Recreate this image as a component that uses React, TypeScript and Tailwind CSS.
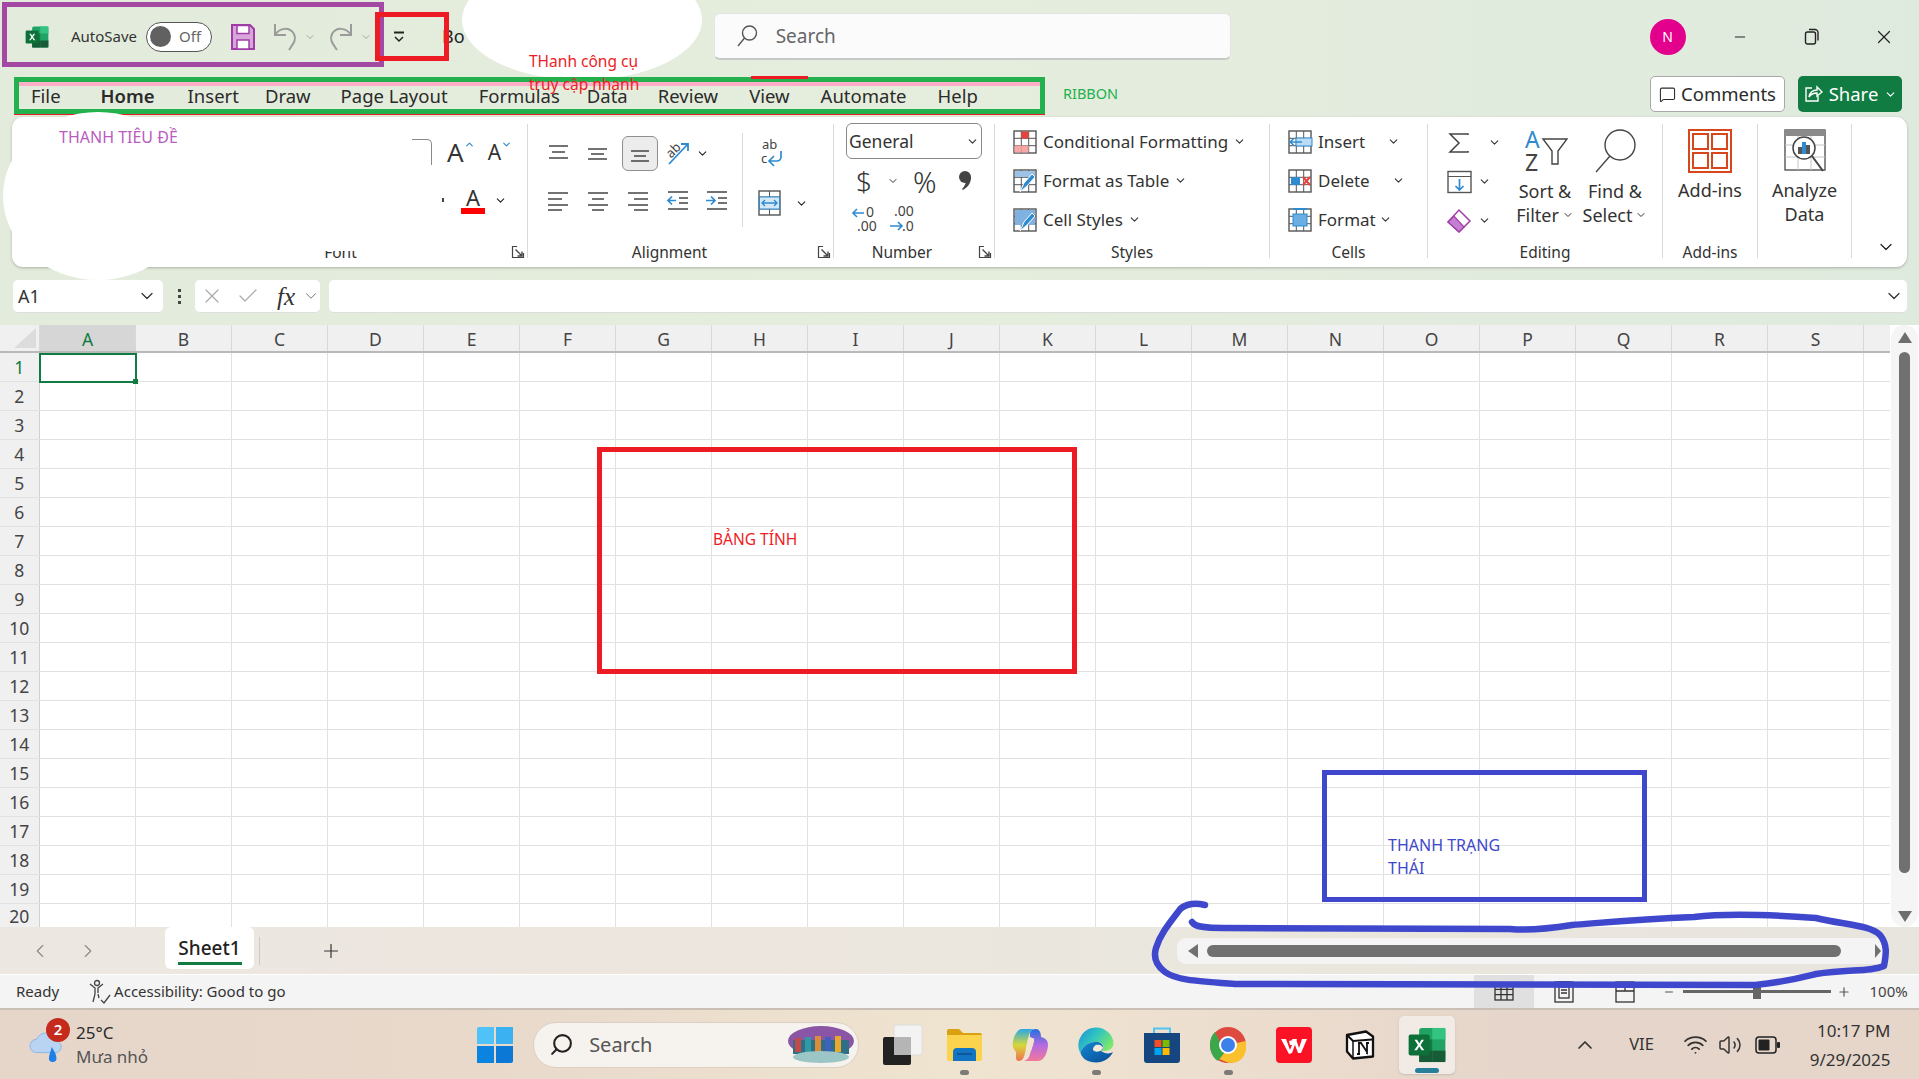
import React from "react";
import { ChevronDown, ChevronLeft, ChevronRight, ChevronUp, Plus, Minus, X, Check, MessageSquare, Search, Wifi, Volume2 } from "lucide-react";

const cols = "ABCDEFGHIJKLMNOPQRS".split("");
const rows = Array.from({ length: 20 }, (_, i) => i + 1);

function Chev({ s = 12, c = "" }: { s?: number; c?: string }) {
  return <ChevronDown size={s} strokeWidth={2} className={c} />;
}

function ExcelLogo({ s = 28 }: { s?: number }) {
  return (
    <svg width={s} height={s} viewBox="0 0 32 32">
      <rect x="10" y="3" width="20" height="26" rx="2" fill="#21a366" />
      <rect x="20" y="3" width="10" height="8.7" fill="#33c481" />
      <rect x="10" y="11.7" width="10" height="8.7" fill="#107c41" />
      <rect x="20" y="20.3" width="10" height="8.7" fill="#185c37" />
      <rect x="10" y="20.3" width="10" height="8.7" fill="#185c37" />
      <rect x="2" y="8" width="16" height="16" rx="1.5" fill="#0e7039" />
      <path d="M6.5 12l2.6 4-2.8 4h2l1.8-2.8 1.8 2.8h2l-2.8-4 2.6-4h-1.9l-1.7 2.6L8.400 12z" fill="#fff" />
    </svg>
  );
}

function Lines({ w = 24, ys, xs }: { w?: number; ys: number[]; xs?: [number, number][] }) {
  return (
    <svg width={w} height="24" viewBox="0 0 24 24" fill="none" stroke="#444" strokeWidth="1.5">
      {ys.map((y, i) => (
        <path key={i} d={`M${xs ? xs[i][0] : 2} ${y}H${xs ? xs[i][1] : 22}`} />
      ))}
    </svg>
  );
}

function GridIcon({ fill, accent }: { fill?: string; accent?: React.ReactNode }) {
  return (
    <svg width="26" height="26" viewBox="0 0 26 26" fill="none">
      <rect x="2" y="2" width="22" height="22" fill="#fff" stroke="#555" strokeWidth="1.4" />
      {fill && <rect x="3" y="3" width="20" height="20" fill={fill} />}
      <path d="M9.300 2v22M16.700 2v22M2 9.300h22M2 16.700h22" stroke="#555" strokeWidth="1" />
      {accent}
    </svg>
  );
}

function Group({ w, label, children, launcher, lc = "" }: { w: string; label?: string; children: React.ReactNode; launcher?: boolean; lc?: string }) {
  return (
    <div className={`${w} h-[134px] shrink-0 border-r border-[#d9d9d9] flex flex-col relative`}>
      <div className="h-[122px] shrink-0 relative">{children}</div>
      <div className={`h-[14px] flex items-center justify-center text-[15.500px] text-[#333] ${lc}`}>{label}</div>
      {launcher && (
        <svg width="14" height="14" viewBox="0 0 14 14" fill="none" stroke="#444" strokeWidth="1.200" className="absolute right-[2px] -bottom-[1px]">
          <path d="M6 1.500H1.500V12.500H12.500V8" />
          <path d="M4.500 4.500L11 11M11 6.500V11H6.500" strokeWidth="1.400" />
        </svg>
      )}
    </div>
  );
}

function StyleRow({ icon, label }: { icon: React.ReactNode; label: string }) {
  return (
    <div className="h-[39px] flex items-center text-[17px] text-[#333] gap-[5px]">
      <span className="w-[26px] flex justify-center">{icon}</span>
      <span>{label}</span>
      <Chev s={13} />
    </div>
  );
}

function TaskIcon({ w = "w-[66px]", dot, children, active }: { w?: string; dot?: boolean; children: React.ReactNode; active?: boolean }) {
  return (
    <div className={`${w} h-[58px] flex items-center justify-center relative shrink-0 rounded-[5px] ${active ? "bg-[#f2ebe5] shadow-sm" : ""}`}>
      {children}
      {dot && <span className="absolute -bottom-[1px] w-[9px] h-[5px] rounded-full bg-[#7d7a77]" />}
      {active && <span className="absolute bottom-[1px] w-[24px] h-[5px] rounded-full bg-[#26809a]" />}
    </div>
  );
}

export default function App() {
  return (
    <div
      className="relative w-[1919px] h-[1079px] overflow-hidden flex flex-col bg-[linear-gradient(90deg,#e3ecdc_0%,#e5eddd_50%,#dfeade_100%)] text-[#242424]"
      style={{ fontFamily: '"Noto Sans","Open Sans",sans-serif' }}
    >
      {/* Title bar */}
      <div className="h-[76px] shrink-0 flex items-center pb-[3px] relative">
        <div className="w-[24px]" />
        <ExcelLogo s={26} />
        <span className="ml-[21px] text-[15px] text-[#333]">AutoSave</span>
        <div className="ml-[9px] w-[66px] h-[30px] rounded-full border border-[#555] bg-white flex items-center pl-[3px]">
          <span className="w-[21px] h-[21px] rounded-full bg-[#616161]" />
          <span className="ml-[8px] text-[15px] text-[#666]">Off</span>
        </div>
        <svg width="26" height="28" viewBox="0 0 26 28" className="ml-[18px]">
          <path d="M2 2h18l4 4v20H2z" fill="#d9a6dc" stroke="#a03ca8" strokeWidth="2" />
          <rect x="7" y="2.500" width="12" height="8" fill="#fff" stroke="#a03ca8" strokeWidth="1.500" />
          <rect x="7" y="17" width="12" height="9" fill="#fff" stroke="#a03ca8" strokeWidth="1.500" />
        </svg>
        <svg width="26" height="32" viewBox="0 0 26 32" fill="none" stroke="#9b9b9b" strokeWidth="2" className="ml-[16px]">
          <path d="M3 3v11h11" />
          <path d="M3 14C8 6 18 6 22 13c3 6-1 10-5 16" />
        </svg>
        <Chev s={12} c="ml-[6px] text-[#a5a5a5]" />
        <svg width="26" height="32" viewBox="0 0 26 32" fill="none" stroke="#9b9b9b" strokeWidth="2" className="ml-[12px]">
          <path d="M23 3v11H12" />
          <path d="M23 14C18 6 8 6 4 13c-3 6 1 10 5 16" />
        </svg>
        <Chev s={12} c="ml-[6px] text-[#a5a5a5]" />
        <svg width="14" height="14" viewBox="0 0 14 14" fill="none" stroke="#222" strokeWidth="1.500" className="ml-[20px]">
          <path d="M2 2.500h10" strokeWidth="2" />
          <path d="M3 7l4 4 4-4" />
        </svg>
        <span className="ml-[36px] text-[18px]">Bo</span>
        <div className="ml-[249px] w-[517px] h-[47px] shrink-0 rounded-[6px] bg-[#fbfbfb] border border-[#e4e4e4] border-b-2 border-b-[#c8c8c8] flex items-center pl-[20px] text-[#666]">
          <svg width="24" height="24" viewBox="0 0 24 24" fill="none" stroke="#555" strokeWidth="1.400">
            <circle cx="14.500" cy="9" r="7" />
            <path d="M9.500 14L3 22" />
          </svg>
          <span className="ml-[17px] text-[19px]">Search</span>
        </div>
        <div className="ml-[419px] w-[36px] h-[36px] rounded-full bg-[#e3008c] text-white text-[14px] flex items-center justify-center">N</div>
        <Minus size={16} strokeWidth={1.500} className="ml-[46px]" />
        <svg width="16" height="18" viewBox="0 0 16 18" fill="none" stroke="#222" strokeWidth="1.400" className="ml-[56px]">
          <rect x="1.500" y="4" width="10" height="12" rx="2" />
          <path d="M5 1.500h6a3 3 0 0 1 3 3v8" />
        </svg>
        <X size={22} strokeWidth={1.300} className="ml-[53px]" />
      </div>

      {/* Tabs */}
      <div className="h-[41px] shrink-0 flex items-center text-[18.500px] text-[#2b2b2b] relative">
        <div className="flex items-center ml-[31px] -mt-[1px]">
          <span>File</span>
          <span className="font-semibold ml-[40px]">Home</span>
          <span className="ml-[33px]">Insert</span>
          <span className="ml-[26px]">Draw</span>
          <span className="ml-[30px]">Page Layout</span>
          <span className="ml-[31px]">Formulas</span>
          <span className="ml-[27px]">Data</span>
          <span className="ml-[30px]">Review</span>
          <span className="ml-[31px]">View</span>
          <span className="ml-[31px]">Automate</span>
          <span className="ml-[31px]">Help</span>
        </div>
        <div className="absolute left-[1650px] top-[0px] w-[135px] h-[36px] rounded-[5px] bg-white border border-[#a8a8a8] flex items-center justify-center gap-[5px]">
          <MessageSquare size={17} strokeWidth={1.500} />
          <span>Comments</span>
        </div>
        <div className="absolute left-[1798px] top-[0px] w-[104px] h-[36px] rounded-[5px] bg-[#107c41] text-white flex items-center justify-center gap-[6px]">
          <svg width="20" height="20" viewBox="0 0 20 20" fill="none" stroke="#fff" strokeWidth="1.400">
            <path d="M9 4H3v13h12v-5" />
            <path d="M6 13c1-5 4-7 8-7V3l5 5-5 4V9c-3 0-6 1-8 4z" />
          </svg>
          <span>Share</span>
          <Chev s={13} />
        </div>
      </div>

      {/* Ribbon */}
      <div className="ml-[12px] w-[1895px] h-[150px] shrink-0 bg-white rounded-[11px] shadow-[0_1px_3px_rgba(0,0,0,0.25)] flex py-[7px]">
        <Group w="w-[516px]" label="Font" launcher lc="pl-[142px]">
          <div className="flex justify-end items-start pt-[7px] h-full">
            <div className="flex flex-col w-[110px] mr-[5px]">
              <div className="flex items-center h-[42px] text-[#333]">
                <div className="w-[20px] h-[26px] border-t border-r border-[#8a8a8a] rounded-tr-[5px]" />
                <span className="ml-[15px] text-[26px] leading-none">A</span>
                <ChevronUp size={11} strokeWidth={2.500} className="text-[#2e8bd0] -mt-[16px]" />
                <span className="ml-[13px] text-[21px] leading-none">A</span>
                <ChevronDown size={11} strokeWidth={2.500} className="text-[#2e8bd0] -mt-[16px]" />
              </div>
              <div className="flex items-center mt-[6px] h-[42px]">
                <span className="ml-[30px] w-[2px] h-[4px] bg-[#444] mr-[17px]" />
                <div className="flex flex-col items-center w-[24px]">
                  <span className="text-[22px] leading-[22px] text-[#333]">A</span>
                  <span className="w-[24px] h-[6px] bg-[#ff0000]" />
                </div>
                <Chev s={13} c="ml-[9px]" />
              </div>
            </div>
          </div>
        </Group>

        <Group w="w-[306px]" label="Alignment" launcher lc="pr-[22px]">
          <div className="flex h-[111px]">
            <div className="w-[214px] pl-[18px] pt-[11px] flex flex-col">
              <div className="flex items-center h-[36px]">
                <span className="w-[39px]"><Lines ys={[5, 11, 17]} xs={[[3, 22], [6, 19], [3, 22]]} /></span>
                <span className="w-[37px]"><Lines ys={[8, 13, 18]} xs={[[3, 22], [6, 19], [3, 22]]} /></span>
                <span className="w-[36px] h-[35px] bg-[#ececec] border border-[#8f8f8f] rounded-[6px] flex items-center justify-center"><Lines ys={[10, 15, 20]} xs={[[3, 21], [6, 18], [3, 21]]} /></span>
                <svg width="28" height="28" viewBox="0 0 28 28" fill="none" className="ml-[6px]">
                  <text x="2" y="16" fontSize="13" fill="#444" transform="rotate(-45 9 12)" style={{ fontFamily: "Noto Sans" }}>ab</text>
                  <path d="M5 25L23 6M17 5h7v7" stroke="#2e8bd0" strokeWidth="1.800" />
                </svg>
                <Chev s={13} c="ml-[4px]" />
              </div>
              <div className="flex items-center h-[36px] mt-[11px]">
                <span className="w-[40px]"><Lines ys={[5, 11, 17, 22]} xs={[[2, 22], [2, 16], [2, 22], [2, 16]]} /></span>
                <span className="w-[40px]"><Lines ys={[5, 11, 17, 22]} xs={[[2, 22], [6, 18], [2, 22], [6, 18]]} /></span>
                <span className="w-[40px]"><Lines ys={[5, 11, 17, 22]} xs={[[2, 22], [8, 22], [2, 22], [8, 22]]} /></span>
                <svg width="24" height="24" viewBox="0 0 24 24" fill="none" className="mr-[15px]">
                  <path d="M2 4h20M13 10h9M13 15h9M2 21h20" stroke="#444" strokeWidth="1.500" />
                  <path d="M10 12.500H2M6 8.500l-4 4 4 4" stroke="#2e8bd0" strokeWidth="1.700" />
                </svg>
                <svg width="24" height="24" viewBox="0 0 24 24" fill="none">
                  <path d="M2 4h20M13 10h9M13 15h9M2 21h20" stroke="#444" strokeWidth="1.500" />
                  <path d="M1 12.500h9M6 8.500l4 4-4 4" stroke="#2e8bd0" strokeWidth="1.700" />
                </svg>
              </div>
            </div>
            <div className="h-[94px] mt-[9px] border-l border-[#d9d9d9] flex flex-col pl-[14px]">
              <div className="h-[39px] flex items-center">
                <svg width="28" height="34" viewBox="0 0 28 34" fill="none">
                  <text x="5" y="13" fontSize="13" fill="#444" style={{ fontFamily: "Noto Sans" }}>ab</text>
                  <text x="4" y="27" fontSize="13" fill="#444" style={{ fontFamily: "Noto Sans" }}>c</text>
                  <path d="M24 15v6a4 4 0 0 1-4 4h-7M17 20l-5 5 5 5" stroke="#2e8bd0" strokeWidth="1.700" />
                </svg>
              </div>
              <div className="flex items-center h-[36px] mt-[13px] -ml-[1px]">
                <svg width="26" height="30" viewBox="0 0 26 30" fill="none">
                  <rect x="3" y="3" width="21" height="24" stroke="#555" strokeWidth="1.400" fill="#fff" />
                  <path d="M3 9h21M3 21h21M13.500 3v6M13.500 21v6" stroke="#555" />
                  <rect x="3.500" y="9" width="20" height="12" fill="#d4e8f7" stroke="#2e8bd0" />
                  <path d="M6 15h15M9 12l-3 3 3 3M18 12l3 3-3 3" stroke="#2e8bd0" strokeWidth="1.400" />
                </svg>
                <Chev s={13} c="ml-[13px]" />
              </div>
            </div>
          </div>
        </Group>

        <Group w="w-[161px]" label="Number" launcher lc="pr-[24px]">
          <div className="flex flex-col pl-[12px]">
            <div className="w-[136px] h-[36px] mt-[-1px] rounded-[6px] border border-[#8a8a8a] flex items-center justify-between px-[2px] text-[17.500px] text-[#333]">
              <span>General</span><Chev s={13} />
            </div>
            <div className="flex items-center h-[44px] text-[#333]">
              <span className="ml-[10px] text-[28px] font-light leading-none w-[24px]">$</span>
              <Chev s={12} c="ml-[7px]" />
              <span className="ml-[14px] text-[29px] font-light leading-none">%</span>
              <svg width="14" height="22" viewBox="0 0 14 22" className="ml-[21px]">
                <circle cx="7" cy="7" r="6" fill="#444" />
                <path d="M13 7c0 6-3 10-8 13l-1-1c3-3 4-6 4-9z" fill="#444" />
              </svg>
            </div>
            <div className="flex items-center h-[30px] mt-[1px] gap-[10px] pl-[5px] text-[#444]">
              <svg width="28" height="30" viewBox="0 0 28 30" fill="none">
                <path d="M13 9H2M6 5L2 9l4 4" stroke="#2e8bd0" strokeWidth="1.600" />
                <text x="15" y="13" fontSize="14" fill="#444" style={{ fontFamily: "Noto Sans" }}>0</text>
                <text x="6" y="27" fontSize="14" fill="#444" style={{ fontFamily: "Noto Sans" }}>.00</text>
              </svg>
              <svg width="28" height="30" viewBox="0 0 28 30" fill="none">
                <text x="5" y="12" fontSize="14" fill="#444" style={{ fontFamily: "Noto Sans" }}>.00</text>
                <path d="M1 22h12M9 18l4 4-4 4" stroke="#2e8bd0" strokeWidth="1.600" />
                <text x="13" y="27" fontSize="14" fill="#444" style={{ fontFamily: "Noto Sans" }}>.0</text>
              </svg>
            </div>
          </div>
        </Group>

        <Group w="w-[275px]" label="Styles">
          <div className="flex flex-col pl-[17px] -mt-[2px]">
            <StyleRow label="Conditional Formatting" icon={<GridIcon accent={<><rect x="9.500" y="2.500" width="7" height="7" fill="#e8413f" /><rect x="9.500" y="16.500" width="7" height="7" fill="#f8a6a6" /><rect x="2.500" y="16.500" width="7" height="7" fill="#f8a6a6" /></>} />} />
            <StyleRow label="Format as Table" icon={<GridIcon accent={<><rect x="3" y="3" width="20" height="6" fill="#9cc3e6" /><path d="M8 24l4-9 8-9 3 3-8 9z" fill="#2e8bd0" stroke="#fff" /></>} />} />
            <StyleRow label="Cell Styles" icon={<GridIcon accent={<><rect x="3" y="3" width="20" height="15" fill="#7fb2e0" /><path d="M8 24l4-9 8-9 3 3-8 9z" fill="#2e8bd0" stroke="#fff" /></>} />} />
          </div>
        </Group>

        <Group w="w-[158px]" label="Cells">
          <div className="flex flex-col pl-[17px] -mt-[2px] text-[17px] text-[#333]">
            <div className="h-[39px] flex items-center gap-[5px]">
              <GridIcon accent={<><rect x="9" y="9" width="16" height="8" fill="#bcdcf4" stroke="#2e8bd0" /><path d="M15 13H3M7 9.500L3 13l4 3.500" stroke="#2e8bd0" strokeWidth="1.500" fill="none" /></>} />
              <span>Insert</span>
              <Chev s={13} c="ml-[17px]" />
            </div>
            <div className="h-[39px] flex items-center gap-[5px]">
              <GridIcon accent={<><rect x="4" y="9" width="9" height="8" fill="#2e8bd0" /><path d="M16 9l7 8M23 9l-7 8" stroke="#e8413f" strokeWidth="2" /></>} />
              <span>Delete</span>
              <Chev s={13} c="ml-[17px]" />
            </div>
            <div className="h-[39px] flex items-center gap-[5px]">
              <GridIcon accent={<><rect x="6" y="7" width="14" height="12" fill="#6aaee4" stroke="#2e8bd0" /><path d="M6 2h14" stroke="#2e8bd0" strokeWidth="2" /></>} />
              <span>Format</span>
              <Chev s={13} c="-ml-[2px]" />
            </div>
          </div>
        </Group>

        <Group w="w-[235px]" label="Editing">
          <div className="flex text-[18px] text-[#333] leading-[24px]">
            <div className="w-[90px] flex flex-col pl-[18px] -mt-[1px]">
              <div className="h-[39px] flex items-center">
                <svg width="26" height="26" viewBox="0 0 26 26" fill="none" stroke="#444" strokeWidth="1.500"><path d="M22 5V4H4l9 9-9 9h18v-1" /></svg>
                <Chev s={13} c="ml-[16px]" />
              </div>
              <div className="h-[39px] flex items-center">
                <svg width="26" height="26" viewBox="0 0 26 26" fill="none"><rect x="2" y="2.500" width="23" height="21" stroke="#555" strokeWidth="1.400" /><path d="M2 7.500h23" stroke="#555" /><path d="M13.500 10v11M9.500 17l4 4 4-4" stroke="#2e8bd0" strokeWidth="1.700" /></svg>
                <Chev s={13} c="ml-[6px]" />
              </div>
              <div className="h-[39px] flex items-center">
                <svg width="26" height="26" viewBox="0 0 26 26" fill="none"><path d="M2 14L13 2l11 11-11 11z" fill="#fff" stroke="#a03ca8" strokeWidth="1.500" /><path d="M2 14l6-6 10 11-5 5z" fill="#c47fd0" stroke="#a03ca8" strokeWidth="1.200" /></svg>
                <Chev s={13} c="ml-[6px]" />
              </div>
            </div>
            <div className="w-[70px] flex flex-col items-center -ml-[8px]">
              <svg width="46" height="46" viewBox="0 0 46 46" fill="none" className="mt-[4px]">
                <text x="3" y="20" fontSize="23" fill="#2e8bd0" style={{ fontFamily: "Noto Sans" }}>A</text>
                <text x="3" y="43" fontSize="23" fill="#444" style={{ fontFamily: "Noto Sans" }}>Z</text>
                <path d="M21 11h24l-9 12v13h-6V23z" stroke="#444" strokeWidth="1.400" />
              </svg>
              <span className="mt-[5px]">Sort &amp;</span>
              <span className="flex items-center gap-[3px]">Filter<Chev s={12} /></span>
            </div>
            <div className="w-[70px] flex flex-col items-center">
              <svg width="46" height="46" viewBox="0 0 46 46" fill="none" stroke="#444" strokeWidth="1.400" className="mt-[4px]">
                <circle cx="28" cy="17" r="15" />
                <path d="M18 28L4 44" />
              </svg>
              <span className="mt-[5px]">Find &amp;</span>
              <span className="flex items-center gap-[3px]">Select<Chev s={12} /></span>
            </div>
          </div>
        </Group>

        <Group w="w-[95px]" label="Add-ins">
          <div className="flex flex-col items-center text-[18px] text-[#333]">
            <svg width="44" height="44" viewBox="0 0 44 44" fill="none" stroke="#d8461c" strokeWidth="2" className="mt-[5px]">
              <rect x="1" y="1" width="42" height="42" />
              <rect x="5" y="5" width="15" height="15" />
              <rect x="24" y="5" width="15" height="15" />
              <rect x="5" y="24" width="15" height="15" />
              <rect x="24" y="24" width="15" height="15" />
            </svg>
            <span className="mt-[5px] leading-[24px]">Add-ins</span>
          </div>
        </Group>

        <Group w="w-[94px]">
          <div className="flex flex-col items-center text-[18px] text-[#333] leading-[24px]">
            <svg width="44" height="44" viewBox="0 0 44 44" fill="none" className="mt-[5px]">
              <rect x="2" y="1" width="40" height="40" fill="#fff" stroke="#555" strokeWidth="1.400" />
              <rect x="2" y="1" width="40" height="6" fill="#8a8a8a" />
              <path d="M2 16h40M2 28h40M15 7v34M28 7v34" stroke="#c4c4c4" />
              <circle cx="21" cy="19" r="11" fill="#fff" stroke="#444" strokeWidth="1.500" />
              <rect x="15" y="18" width="4" height="7" fill="#555" />
              <rect x="19" y="13" width="4" height="12" fill="#2e8bd0" />
              <rect x="23" y="16" width="4" height="9" fill="#555" />
              <path d="M29 27l11 15" stroke="#444" strokeWidth="2" />
            </svg>
            <span className="mt-[5px]">Analyze</span>
            <span>Data</span>
          </div>
        </Group>

        <div className="flex-1 flex items-end justify-center pb-[3px] pl-[12px]">
          <ChevronDown size={20} strokeWidth={1.500} />
        </div>
      </div>

      {/* Formula bar */}
      <div className="h-[33px] mt-[13px] shrink-0 flex items-stretch ml-[13px] text-[#333]">
        <div className="w-[150px] bg-white rounded-[5px] border-b border-[#ddd] flex items-center justify-between pl-[5px] pr-[6px] text-[18px]">
          <span className="mt-[1px]">A1</span><ChevronDown size={20} strokeWidth={1.500} />
        </div>
        <div className="w-[32px] flex flex-col items-center justify-center gap-[3px]">
          <span className="w-[3px] h-[3px] bg-[#444]" /><span className="w-[3px] h-[3px] bg-[#444]" /><span className="w-[3px] h-[3px] bg-[#444]" />
        </div>
        <div className="w-[125px] bg-white rounded-[5px] border-b border-[#ddd] flex items-center pl-[5px]">
          <X size={24} strokeWidth={1.200} className="text-[#a9a9a9]" />
          <Check size={24} strokeWidth={1.200} className="ml-[12px] text-[#a9a9a9]" />
          <span className="ml-[17px] text-[25px] italic text-[#333] leading-none" style={{ fontFamily: '"Liberation Serif",serif' }}>fx</span>
          <ChevronDown size={18} strokeWidth={1.200} className="text-[#666] ml-[7px]" />
        </div>
        <div className="ml-[9px] w-[1578px] bg-white rounded-[5px] border-b border-[#ddd] flex items-center justify-end pr-[3px]">
          <ChevronDown size={20} strokeWidth={1.500} />
        </div>
      </div>

      {/* Sheet grid */}
      <div className="mt-[12px] h-[602px] shrink-0 flex bg-white relative">
        <div className="w-[1890px] overflow-hidden">
          <div className="h-[28px] flex bg-[#f0f0f0] border-b-2 border-[#b9b9b9] relative">
            <div className="w-[39.500px] shrink-0 border-r border-[#d8d8d8] flex items-end justify-end pr-[3px] pb-[3px]">
              <span className="border-b-[20px] border-b-[#dcdcdc] border-l-[22px] border-l-transparent" />
            </div>
            {cols.map((c, i) => (
              <div key={c} className={`w-[96px] shrink-0 border-r border-[#d8d8d8] flex items-center justify-center pl-[1px] pt-[2px] text-[17.500px] ${i === 0 ? "bg-[#d6d6d6] text-[#107c41]" : "text-[#444]"}`}>{c}</div>
            ))}
          </div>
          {rows.map((r) => (
            <div key={r} className={`flex border-b border-[#e1e1e1] ${r === 20 ? "h-[24px] border-b-0" : "h-[29px]"}`}>
              <div className={`w-[39.500px] shrink-0 bg-[#f0f0f0] border-r border-[#d0d0d0] flex items-center justify-center pt-[1px] text-[17.500px] ${r === 1 ? "text-[#107c41]" : "text-[#444]"}`}>{r}</div>
              {cols.map((c) => (
                <div key={c} className="w-[96px] shrink-0 border-r border-[#e1e1e1]" />
              ))}
            </div>
          ))}
        </div>
        {/* Vertical scrollbar */}
        <div className="w-[27px] ml-[1px] bg-[#f5f5f5] rounded-full flex flex-col items-center pt-[7px]">
          <span className="border-l-[7px] border-r-[7px] border-b-[11px] border-l-transparent border-r-transparent border-b-[#6e6e6e]" />
          <span className="mt-[9px] w-[11px] h-[521px] rounded-full bg-[#707070]" />
          <span className="mt-[38px] border-l-[7px] border-r-[7px] border-t-[11px] border-l-transparent border-r-transparent border-t-[#6e6e6e]" />
        </div>
        <div className="absolute left-[39px] top-[28px] w-[98px] h-[30px] border-2 border-[#107c41]">
          <span className="absolute -right-[3px] -bottom-[3px] w-[5px] h-[5px] bg-[#107c41]" />
        </div>
      </div>

      {/* Sheet tabs */}
      <div className="h-[48px] shrink-0 flex items-center bg-[linear-gradient(90deg,#ece7e0_0%,#ece6df_40%,#eae7de_60%,#e8e4de_100%)] border-b border-white">
        <ChevronLeft size={22} strokeWidth={1.200} className="ml-[29px] text-[#888]" />
        <ChevronRight size={22} strokeWidth={1.200} className="ml-[26px] text-[#888]" />
        <div className="ml-[66px] w-[89px] h-[42px] -mt-[6px] bg-white rounded-[6px] flex flex-col items-center pt-[7px] text-[19px] font-medium relative">
          <span className="leading-[28px] text-[#222]">Sheet1</span>
          <span className="w-[64px] h-[3px] bg-[#107c41]" />
        </div>
        <span className="ml-[5px] w-[1px] h-[28px] bg-[#cfcaca]" />
        <Plus size={22} strokeWidth={1.300} className="ml-[60px] text-[#333]" />
        <div className="ml-[835px] w-[710px] h-[26px] rounded-[9px] bg-[#f4f4f4] flex items-center pl-[11px]">
          <span className="border-r-[10px] border-t-[7px] border-b-[7px] border-r-[#707070] border-t-transparent border-b-transparent" />
          <span className="ml-[9px] w-[634px] h-[12px] rounded-full bg-[#707070]" />
          <span className="ml-[34px] border-l-[6px] border-t-[7px] border-b-[7px] border-l-[#707070] border-t-transparent border-b-transparent" />
        </div>
      </div>

      {/* Status bar */}
      <div className="h-[35px] shrink-0 flex items-center bg-[#f4f4f4] border-b-[2px] border-[#c9bfb5] text-[15px] text-[#333]">
        <span className="ml-[16px]">Ready</span>
        <svg width="24" height="26" viewBox="0 0 24 26" fill="none" stroke="#444" strokeWidth="1.300" className="ml-[29px]">
          <circle cx="9" cy="4" r="2.500" />
          <path d="M2 5l5 4v6l-2 8M15 5l-5 4v5M10 15l1 4" />
          <path d="M13 21l3 3 6-8" />
        </svg>
        <span className="ml-[2px]">Accessibility: Good to go</span>
        <div className="ml-[1188px] w-[60px] h-[33px] bg-[#e0e0e0] flex items-center justify-center">
          <svg width="20" height="20" viewBox="0 0 20 20" fill="none" stroke="#333" strokeWidth="1.300"><rect x="1" y="2" width="18" height="16" /><path d="M7 2v16M13 2v16M1 7.300h18M1 12.600h18" /></svg>
        </div>
        <svg width="22" height="22" viewBox="0 0 22 22" fill="none" stroke="#333" strokeWidth="1.300" className="ml-[19px]"><rect x="2" y="1" width="18" height="20" /><rect x="6" y="1" width="10" height="16" /><path d="M8 6h6M8 9h6M8 12h6" /></svg>
        <svg width="22" height="22" viewBox="0 0 22 22" fill="none" stroke="#333" strokeWidth="1.300" className="ml-[39px]"><rect x="2" y="1" width="18" height="20" /><path d="M2 10h18M11 1v9" /></svg>
        <Minus size={12} className="ml-[27px] text-[#555]" />
        <div className="ml-[8px] w-[148px] h-[3px] bg-[#666] relative flex items-center justify-center">
          <span className="absolute w-[8px] h-[14px] bg-[#666]" />
        </div>
        <Plus size={14} className="ml-[6px] text-[#555]" />
        <span className="ml-[19px] text-[15px] text-[#444]">100%</span>
      </div>

      {/* Taskbar */}
      <div className="flex-1 flex items-center bg-[linear-gradient(90deg,#e6d6ca_0%,#e8d9cb_25%,#efe4d0_50%,#eee0d0_60%,#e5d5ca_80%,#e6d6ca_100%)] text-[#333]">
        <div className="relative ml-[29px] w-[36px] h-[48px] flex items-center">
          <svg width="38" height="44" viewBox="0 0 38 44" fill="none">
            <path d="M8 30a7 7 0 0 1 0-14 11 11 0 0 1 21 2 6 6 0 0 1-2 12z" fill="#b9d4f2" stroke="#8ab6e8" />
            <path d="M24 24c3 5 5 8 5 12a4 4 0 0 1-8 0c0-4 2-7 3-12z" fill="#1e7fe6" />
          </svg>
          <span className="absolute left-[17px] -top-[3px] w-[24px] h-[24px] rounded-full bg-[#c42b1c] text-white text-[15px] font-semibold flex items-center justify-center">2</span>
        </div>
        <div className="ml-[11px] flex flex-col text-[17px] leading-[24px]">
          <span className="text-[#2b2b2b]">25°C</span>
          <span className="text-[#555]">Mưa nhỏ</span>
        </div>
        <div className="ml-[329px] grid grid-cols-2 gap-[2px] w-[36px]">
          <span className="h-[17px] bg-[#4fc3f7] rounded-tl-[2px]" />
          <span className="h-[17px] bg-[#3bb1f2]" />
          <span className="h-[17px] bg-[#0a84df]" />
          <span className="h-[17px] bg-[#0a78d4] rounded-br-[2px]" />
        </div>
        <div className="ml-[20px] w-[326px] h-[46px] rounded-full bg-[#f6f2ee] border border-[#dbcfc4] flex items-center pl-[15px] relative">
          <Search size={25} strokeWidth={2} className="text-[#222] scale-x-[-1]" />
          <span className="ml-[15px] text-[20px] text-[#555]">Search</span>
          <svg width="72" height="38" viewBox="0 0 72 38" className="absolute right-[1px]">
            <ellipse cx="36" cy="15" rx="33" ry="15" fill="#8a55a5" />
            <rect x="8" y="14" width="56" height="14" fill="#2f6f86" />
            <rect x="10" y="12" width="6" height="14" fill="#c44a4a" />
            <rect x="20" y="11" width="6" height="15" fill="#2f9aa6" />
            <rect x="30" y="10" width="6" height="16" fill="#d98c3a" />
            <rect x="40" y="11" width="6" height="15" fill="#4060c0" />
            <rect x="50" y="10" width="6" height="16" fill="#e8a92e" />
            <ellipse cx="36" cy="31" rx="28" ry="6" fill="#9cc6c6" />
          </svg>
        </div>
        <div className="ml-[23px] relative w-[42px] h-[42px] shrink-0 flex">
          <svg width="42" height="42" viewBox="0 0 42 42">
            <rect x="12" y="1" width="28" height="30" rx="2" fill="#f3f3f3" stroke="#ddd" />
            <rect x="1" y="13" width="28" height="28" rx="2" fill="#222" />
            <rect x="12" y="13" width="17" height="18" fill="#b5b5b5" />
          </svg>
        </div>
        <TaskIcon w="w-[66px] ml-[7px]" dot>
          <svg width="37" height="34" viewBox="0 0 37 34">
            <path d="M1 3a2 2 0 0 1 2-2h10l4 4h17a2 2 0 0 1 2 2v5H1z" fill="#d9a010" />
            <path d="M1 7h35v24a2 2 0 0 1-2 2H3a2 2 0 0 1-2-2z" fill="#fcd34d" />
            <path d="M7 33V24a4 4 0 0 1 4-4h15a4 4 0 0 1 4 4v9z" fill="#1474c4" />
            <path d="M11 26h15" stroke="#0b4f8f" strokeWidth="1.500" />
          </svg>
        </TaskIcon>
        <TaskIcon>
          <svg width="36" height="34" viewBox="0 0 36 34">
            <defs>
              <linearGradient id="cpa" x1="0" y1="0" x2="0" y2="1"><stop offset="0" stopColor="#1f6fe0" /><stop offset=".5" stopColor="#b56ae0" /><stop offset="1" stopColor="#f2789a" /></linearGradient>
              <linearGradient id="cpb" x1="0" y1="0" x2="0" y2="1"><stop offset="0" stopColor="#28a8e8" /><stop offset=".5" stopColor="#d6d83a" /><stop offset="1" stopColor="#f07050" /></linearGradient>
            </defs>
            <path d="M10 1h12c-3 1-4 3-5 6l-4 18c-1 5-3 8-6 8-2 0-3-1-3-4V24C1 20 0 18 1 13 2 8 5 1 10 1z" fill="url(#cpb)" />
            <path d="M18 5c1-3 3-4 6-4 3 0 5 3 5 8 4 1 7 3 7 8 0 5-3 16-10 16H12c3-1 5-3 6-7l3-10c1-4-1-7-3-7z" fill="url(#cpa)" />
            <path d="M16 10h5c2 1 1 4 0 7l-2 6h-4c-2-1-1-4 0-7z" fill="#f2e4d0" />
          </svg>
        </TaskIcon>
        <TaskIcon dot>
          <svg width="36" height="36" viewBox="0 0 36 36">
            <defs>
              <linearGradient id="edg" x1="0" y1="0" x2="1" y2="0.600"><stop offset="0" stopColor="#1a8fd8" /><stop offset=".5" stopColor="#30c5c0" /><stop offset="1" stopColor="#7ee86a" /></linearGradient>
              <linearGradient id="edb" x1="0" y1="0" x2="1" y2="1"><stop offset="0" stopColor="#1388d0" /><stop offset="1" stopColor="#0a4a96" /></linearGradient>
            </defs>
            <path d="M18 0.500c10 0 17.500 8 17.500 15.500 0 5-4 8-9 8h-3c2-1 3-3 2-5-1-3-5-5-9-4C9.500 16 4 20 2.500 26-0.500 21 0 15 2 11 5 4.500 11 0.500 18 0.500z" fill="url(#edg)" />
            <path d="M2.500 26c1.500-6 7-10 13.500-11 4-1 8 1 9 4 1 2 0 4-2 5 4 3 9 3 12 1-3 6-9 10.500-17 10.500C10 35.500 4.500 32 2.500 26z" fill="url(#edb)" />
            <path d="M15 23c0-4 3-6 7-5 2 1 3 2 3 3-1 2-2 3-3 3-3 1-5 1-7-1z" fill="#f3ead8" />
          </svg>
        </TaskIcon>
        <TaskIcon>
          <svg width="36" height="36" viewBox="0 0 36 36">
            <path d="M10 7V1.500h16V7" fill="none" stroke="#52c4f0" strokeWidth="2" />
            <path d="M0 6h36v27a3 3 0 0 1-3 3H3a3 3 0 0 1-3-3z" fill="#15467f" />
            <rect x="10.500" y="13" width="7" height="7" fill="#f25022" />
            <rect x="18.500" y="13" width="7" height="7" fill="#7fba00" />
            <rect x="10.500" y="21" width="7" height="7" fill="#00a4ef" />
            <rect x="18.500" y="21" width="7" height="7" fill="#ffb900" />
          </svg>
        </TaskIcon>
        <TaskIcon dot>
          <svg width="36" height="36" viewBox="0 0 36 36">
            <circle cx="18" cy="18" r="18" fill="#dd4b3e" />
            <path d="M4.500 30L18 18l17.500-4c2 7 0 14-4 18-3 3-8 4-12.500 4z" fill="#fbc02d" />
            <path d="M0 18C0 12 2 8 5 5l10 20-7 9C3 31 0 25 0 18z" fill="#3ba64a" />
            <circle cx="18" cy="18" r="9" fill="#fff" />
            <circle cx="18" cy="18" r="7" fill="#3d80ea" />
          </svg>
        </TaskIcon>
        <TaskIcon>
          <svg width="36" height="36" viewBox="0 0 36 36">
            <rect width="36" height="36" rx="4" fill="#fb1225" />
            <path d="M5 12h5l4 11 2-5h-2l-1-4 8-2-5 14-3 1z" fill="#fff" />
            <path d="M16 12h4l3 9 3-9h5l-6 14h-3l-3-8z" fill="#fff" />
          </svg>
        </TaskIcon>
        <TaskIcon>
          <svg width="30" height="30" viewBox="0 0 30 30">
            <path d="M2 5l19-3.500 7 5v20L8 28.500l-6-7z" fill="#fff" stroke="#111" strokeWidth="2.300" strokeLinejoin="round" />
            <path d="M2.500 5.500L8 11l19-1.500" fill="none" stroke="#111" strokeWidth="2" />
            <path d="M8 11v17" stroke="#111" strokeWidth="1.500" />
            <path d="M13 13h3l6 9v-9M21 13h3M12 24h3M14 13v11M22 13v11" fill="none" stroke="#111" strokeWidth="1.800" />
          </svg>
        </TaskIcon>
        <TaskIcon w="w-[56px] ml-[6px]" active>
          <ExcelLogo s={42} />
        </TaskIcon>
        <ChevronUp size={24} strokeWidth={1.700} className="ml-[118px]" />
        <span className="ml-[32px] text-[16.500px] text-[#333]">VIE</span>
        <Wifi size={25} strokeWidth={1.700} className="ml-[29px]" />
        <Volume2 size={24} strokeWidth={1.500} className="ml-[10px]" />
        <svg width="26" height="18" viewBox="0 0 26 18" fill="none" className="ml-[13px]">
          <rect x="1" y="1" width="20" height="16" rx="3" stroke="#222" strokeWidth="1.500" />
          <rect x="3.500" y="3.500" width="11" height="11" rx="1" fill="#222" />
          <rect x="22" y="6" width="3" height="6" rx="1" fill="#222" />
        </svg>
        <div className="ml-[29px] flex flex-col items-end text-[17px] leading-[29px] text-[#333]">
          <span>10:17 PM</span>
          <span>9/29/2025</span>
        </div>
      </div>

      {/* Hand-drawn annotations over the screenshot */}
      <div className="absolute left-[2px] top-[2px] w-[382px] h-[65px] border-[5px] border-[#a349a4]" />
      <div className="absolute left-[375px] top-[12px] w-[74px] h-[49px] border-[5px] border-[#ed1c24]" />
      <div className="absolute left-[462px] -top-[40px] w-[240px] h-[120px] rounded-[50%] bg-white" />
      <div className="absolute left-[14px] top-[77px] w-[1031px] h-[37px] border-[5px] border-[#22b14c] shadow-[0_1px_0_#ed1c24] after:absolute after:left-0 after:right-0 after:top-0 after:h-[4px] after:bg-[#ffaec9]" />
      <div className="absolute left-[529px] top-[50px] text-[15.500px] leading-[23px] text-[#ed1c24]">
        <div>THanh công cụ</div>
        <div>truy cập nhanh</div>
      </div>
      <span className="absolute left-[751px] top-[76px] w-[57px] h-[3px] bg-[#ed1c24]" />
      <span className="absolute left-[1063px] top-[83px] text-[14.500px] text-[#22b14c]">RIBBON</span>
      <div className="absolute left-[3px] top-[112px] w-[190px] h-[168px] rounded-[50%] bg-white" />
      <span className="absolute left-[59px] top-[125px] text-[16px] text-[#b95cc0]">THANH TIÊU ĐỀ</span>
      <div className="absolute left-[318px] top-[238px] w-[46px] h-[13px] bg-white" />

      <div className="absolute left-[597px] top-[447px] w-[480px] h-[227px] border-[5px] border-[#ed1c24]" />
      <span className="absolute left-[713px] top-[528px] text-[15.500px] text-[#ed1c24]">BẢNG TÍNH</span>
      <div className="absolute left-[1322px] top-[770px] w-[325px] h-[132px] border-[5px] border-[#3f48cc]" />
      <div className="absolute left-[1388px] top-[834px] text-[16px] leading-[23px] text-[#3f48cc]">
        <div>THANH TRẠNG</div>
        <div>THÁI</div>
      </div>
      <svg width="1919" height="1079" viewBox="0 0 1919 1079" fill="none" className="absolute left-0 top-0 pointer-events-none">
        <path
          d="M1205 905C1192 902 1182 905 1178 912 1168 925 1160 935 1156 948 1153 958 1157 966 1165 972 1176 980 1195 981 1235 984L1755 985C1785 982 1800 978 1816 974 1850 969 1870 972 1884 966 1886 955 1888 945 1880 935 1870 925 1845 925 1816 918 1760 914 1720 914 1694 917 1640 919 1610 922 1572 925 1540 930 1520 930 1510 929L1223 928C1205 928 1195 927 1192 922"
          stroke="#3f48cc"
          strokeWidth="6.500"
          strokeLinecap="round"
          strokeLinejoin="round"
        />
      </svg>
    </div>
  );
}
